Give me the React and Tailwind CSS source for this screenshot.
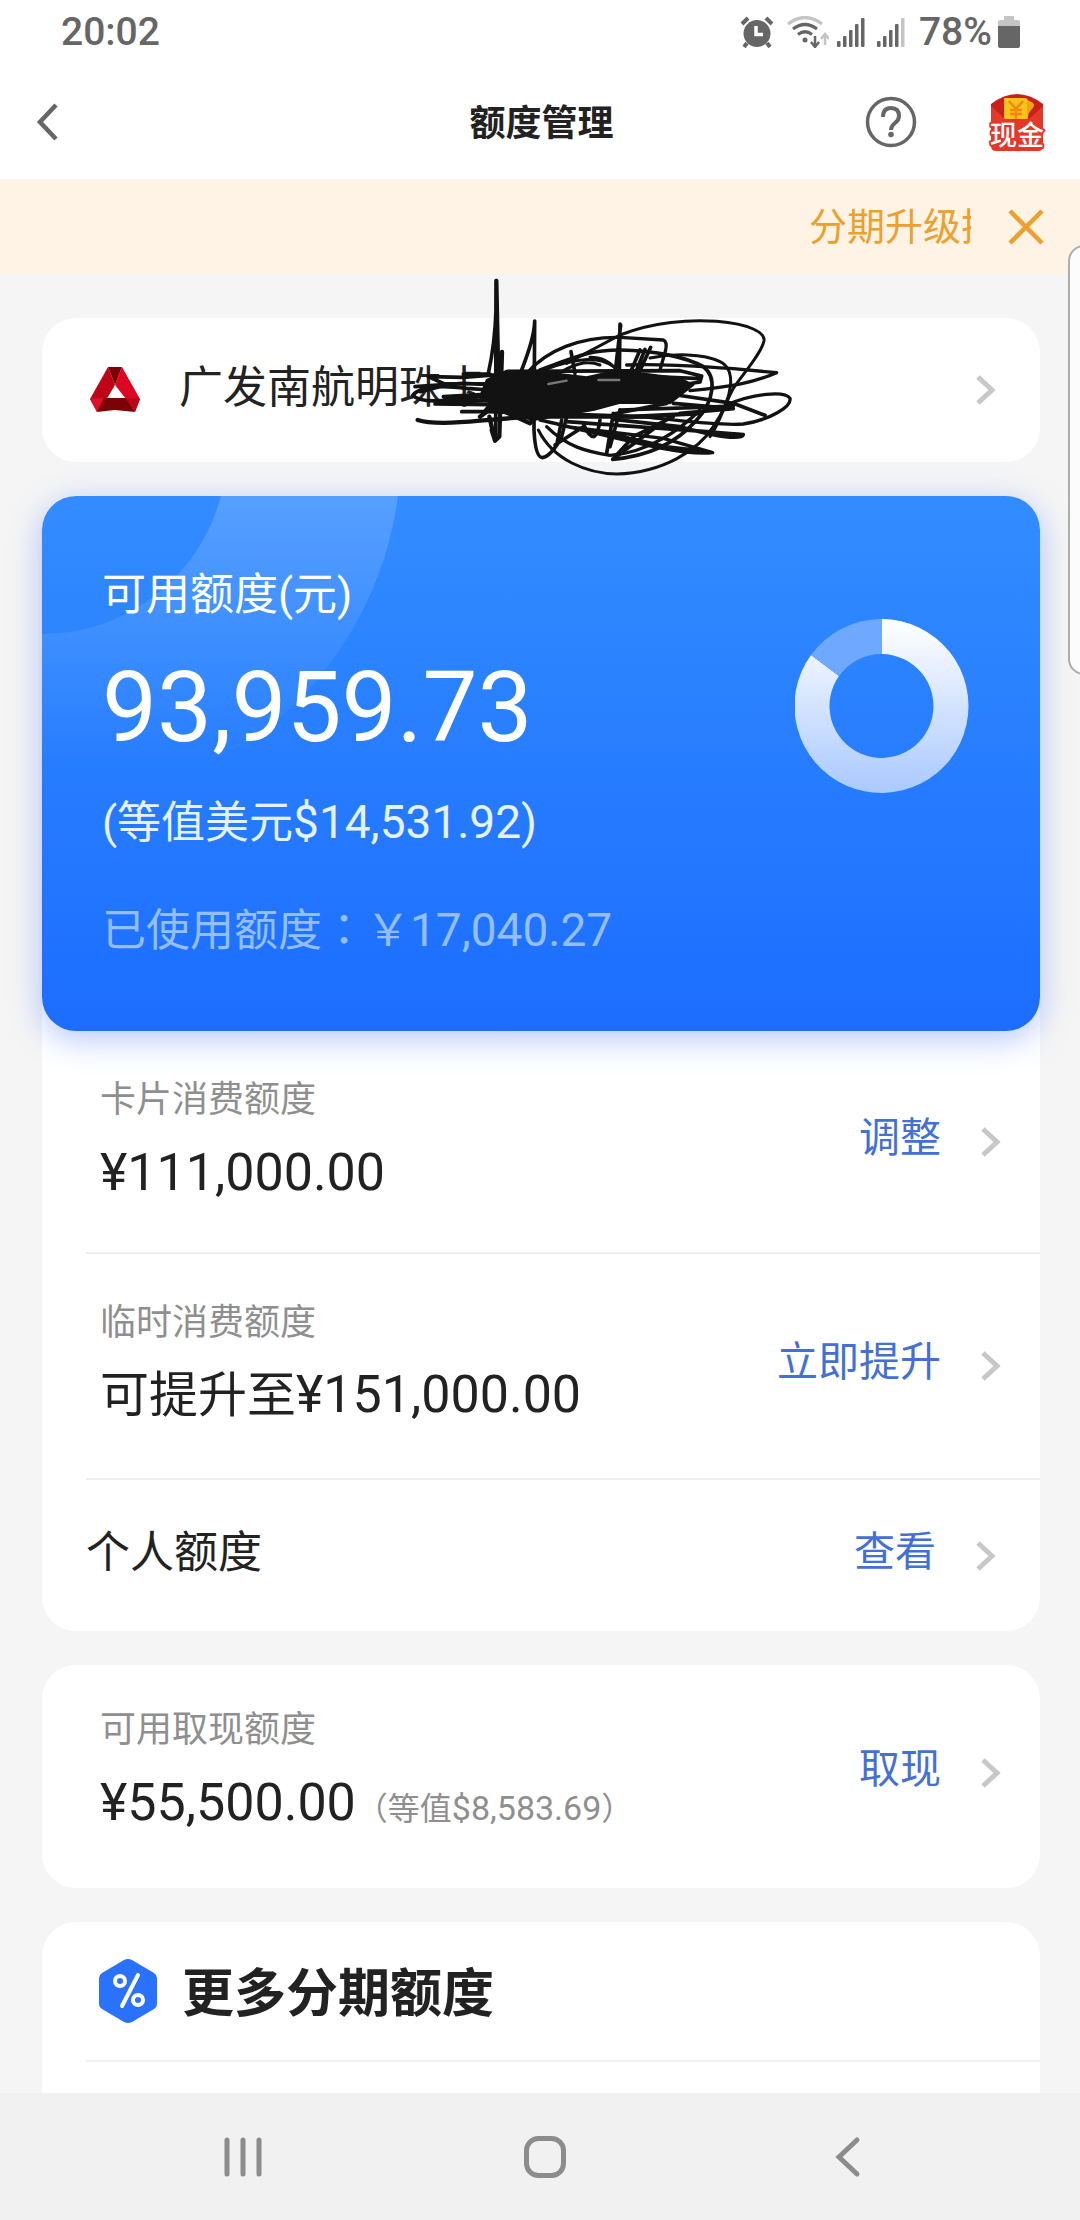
import React from "react";

function Chevron() {
  return (
    <svg className="h-[30px] w-5 shrink-0" viewBox="0 0 20 30" fill="none" stroke="#c8c8c8" strokeWidth="5" aria-hidden="true">
      <path d="M2 2 L16 15 L2 28" />
    </svg>
  );
}

function SignalBars({ last }) {
  return (
    <svg className="h-8 w-7 shrink-0" viewBox="0 0 28 32" fill="#666" aria-hidden="true">
      <rect x="0" y="25" width="3.5" height="6" rx="1" />
      <rect x="6" y="20" width="3.5" height="11" rx="1" />
      <rect x="12" y="14" width="3.5" height="17" rx="1" />
      <rect x="18" y="8" width="3.5" height="23" rx="1" />
      <rect x="24" y="2" width="3.5" height="29" rx="1" fill={last} />
    </svg>
  );
}

function StatusBar() {
  return (
    <div className="flex h-16 items-center bg-white pl-[61px] pr-[60px] text-[39px] leading-[48px] text-[#666]">
      <span className="flex-1 font-medium">20:02</span>
      <svg className="mr-[13px] h-8 w-[34px] shrink-0" viewBox="0 0 34 32" fill="none" stroke="#666" aria-hidden="true">
        <circle cx="17" cy="17.5" r="13.5" fill="#666" stroke="none" />
        <path d="M2 8 L8 2 M26 2 L32 8" strokeWidth="4" />
        <path d="M7 27 L4 31 M27 27 L30 31" strokeWidth="4" />
        <path d="M16 10 V18.5 H23" stroke="#fff" strokeWidth="3.5" />
      </svg>
      <svg className="mr-2 h-8 w-[42px] shrink-0" viewBox="0 0 42 32" fill="none" strokeWidth="3.2" aria-hidden="true">
        <path d="M1 8 Q18 -5 35 8" stroke="#c4c4c4" />
        <path d="M6 13 Q18 4 30 13" stroke="#666" />
        <path d="M11 18.500 Q18 13 25 18.500" stroke="#666" />
        <circle cx="18" cy="24" r="2.500" fill="#666" />
        <path d="M28 20 V31 M24 26 L28 31 L32 26" stroke="#666" strokeWidth="2.500" />
        <path d="M38 29 V18 M34 23 L38 18 L42 23" stroke="#c4c4c4" strokeWidth="2.500" />
      </svg>
      <div className="flex gap-3">
        <SignalBars last="#666" />
        <SignalBars last="#c4c4c4" />
      </div>
      <span className="ml-3.5 font-medium">78%</span>
      <svg className="ml-1.5 h-8 w-[22px] shrink-0" viewBox="0 0 22 32" aria-hidden="true">
        <path d="M6 0 H16 V4 H20 Q22 4 22 6 V12 H0 V6 Q0 4 2 4 H6Z" fill="#c4c4c4" />
        <path d="M0 10 H22 V30 Q22 32 20 32 H2 Q0 32 0 30Z" fill="#666" />
      </svg>
    </div>
  );
}

function CashEnvelope() {
  return (
    <svg className="h-[60px] w-[60px]" viewBox="0 0 60 60" aria-hidden="true">
      <path d="M4 12 Q30 -8 56 12 L56 34 H4Z" fill="#c9201b" />
      <path d="M17 6 H39 L42 9 Q46 10 47 13 Q46 17 42 19 L40 30 H17Z" fill="#fdc21c" />
      <path d="M40 8 L47 13 L40 24Z" fill="#f7a30f" />
      <path d="M22 9 L29 17 L36 9 M29 17 V27 M23 18 H35 M23 22 H35" fill="none" stroke="#ee8a12" strokeWidth="2.500" />
      <path d="M4 14 L18 27 H42 L56 14 V54 Q56 59 51 59 H9 Q4 59 4 54Z" fill="#e5372a" />
      <text
        x="30"
        y="53"
        textAnchor="middle"
        fontSize="27"
        fontWeight="500"
        fill="#fff"
        stroke="#e5372a"
        strokeWidth="4"
        strokeLinejoin="round"
        paintOrder="stroke"
      >
        现金
      </text>
    </svg>
  );
}

function Header() {
  return (
    <header className="grid h-[115px] grid-cols-3 items-center bg-white pl-9 pr-[33px]">
      <button type="button" aria-label="返回" className="w-6">
        <svg className="h-10 w-6" viewBox="0 0 24 40" fill="none" stroke="#666" strokeWidth="4.500" aria-hidden="true">
          <path d="M20 3 L4 20 L20 37" />
        </svg>
      </button>
      <h1 className="pt-1 text-center text-[36px] font-bold leading-[48px] text-[#222]">额度管理</h1>
      <div className="flex items-center justify-end gap-[70px]">
        <button type="button" aria-label="帮助">
          <svg className="h-[52px] w-[52px]" viewBox="0 0 52 52" fill="none" stroke="#666" strokeWidth="3.500" aria-hidden="true">
            <circle cx="26" cy="26" r="23.500" />
            <path d="M18 21 Q18 12 26 12 Q34 12 34 20 Q34 24 30 27 Q26 30 26 34" strokeWidth="4" />
            <circle cx="26" cy="38.500" r="2.800" fill="#666" stroke="none" />
          </svg>
        </button>
        <button type="button" aria-label="现金">
          <CashEnvelope />
        </button>
      </div>
    </header>
  );
}

function Notice() {
  return (
    <div className="flex h-[95px] items-center justify-end bg-[#fef3e4] pr-9 text-[#eca02e]">
      <p className="w-[162px] overflow-hidden whitespace-nowrap text-[38px] leading-[56px]">分期升级换</p>
      <button type="button" aria-label="关闭" className="ml-[37px]">
        <svg className="h-9 w-9" viewBox="0 0 36 36" fill="none" stroke="currentColor" strokeWidth="4.500" aria-hidden="true">
          <path d="M2 2 L34 34 M34 2 L2 34" />
        </svg>
      </button>
    </div>
  );
}

function Scribble() {
  return (
    <svg
      className="pointer-events-none absolute -top-12 left-[338px] h-[220px] w-[440px]"
      viewBox="0 0 1320 660"
      fill="none"
      stroke="#121212"
      strokeWidth="11"
      strokeLinecap="round"
      strokeLinejoin="round"
      aria-hidden="true"
    >
      <path d="M320 330 L380 302 L470 312 L520 310 L620 322 L700 304 L800 312 L900 325 L940 345 L870 400 L720 398 L640 420 L460 450 L380 430 L310 425 L330 400 L300 380 Z" fill="#121212" strokeWidth="6" />
      <path d="M348 32 L347 500 M348 120 Q345 220 325 310 M350 32 L356 330" />
      <path d="M366 246 L358 500 L345 512 L328 440 M335 480 L345 512" strokeWidth="13" />
      <path d="M464 153 Q464 200 425 300 M464 153 L462 480 Q466 562 487 563 Q515 558 545 500 L560 440" />
      <path d="M573 245 L585 310 M720 162 L718 320 M722 165 L704 320 M780 240 L750 310 M812 232 L790 280 L775 310 M795 238 L770 300" />
      <path d="M560 280 L720 195 C820 155 930 148 1010 154 C1110 162 1155 188 1152 212 C1145 250 1090 310 1060 355 C1030 410 1020 460 990 500" strokeWidth="9" />
      <path d="M440 310 C500 240 600 200 720 202 L850 210 Q862 215 857 240 L840 300" strokeWidth="10" />
      <path d="M475 480 C520 570 620 610 710 612 C850 608 955 540 1000 470 C1060 380 1070 300 1020 275 C970 250 880 250 810 264" strokeWidth="9" />
      <path d="M480 300 C570 270 610 240 720 240 C830 242 920 262 970 290 C1010 320 1005 390 950 450 C880 530 790 560 698 568 L870 440 M698 568 L760 500 L880 440" />
      <path d="M490 300 C600 260 660 260 700 290 M630 262 Q680 262 710 300 M520 320 C580 280 620 270 660 285" strokeWidth="9" />
      <path d="M740 285 C860 280 960 290 1060 296 L1190 308 C1120 338 1060 350 930 362" strokeWidth="10" />
      <path d="M1040 405 C1120 370 1215 362 1230 385 C1235 410 1170 450 1090 462 C1000 468 900 450 780 440" strokeWidth="10" />
      <path d="M890 375 L1060 400 L1155 436 M720 420 L960 412 L1060 408 M880 400 L1060 416 L900 430" />
      <path d="M385 304 L900 302 L965 318 L960 336 L860 352 M780 318 L960 326 M860 400 L700 432" />
      <path d="M560 455 C760 470 1000 485 1090 494 C1085 510 1010 500 900 470 L700 448" />
      <path d="M560 470 L850 505 L998 548 C900 560 700 500 480 450 M640 480 L860 530 L990 545" strokeWidth="10" />
      <path d="M500 470 C560 530 620 545 690 556 C800 550 900 480 960 420" strokeWidth="10" />
      <path d="M525 525 L610 470 M545 450 L530 525 M610 460 Q625 500 642 500 Q655 490 660 450 M700 430 L680 550 M720 420 L690 530" />
      <path d="M113 450 C150 462 220 460 300 452 L450 440 L800 440" strokeWidth="13" />
      <path d="M150 320 L250 322 L380 312 M250 312 L330 312 M105 350 L250 340 L350 345 M98 376 C120 350 180 345 260 355 L330 360 M98 376 C120 400 180 395 300 380 M165 402 L330 404 M145 320 L200 345 L120 365 M190 380 L330 372 M245 425 L350 425 M165 395 L320 392" strokeWidth="11" />
      <path d="M300 440 L340 410 L450 460 L470 430 L760 440 L960 430" strokeWidth="13" />
      <path d="M505 342 L560 332 M655 330 H718" stroke="#777" strokeWidth="7" />
    </svg>
  );
}

function CardPicker() {
  return (
    <section className="relative">
      <button type="button" className="flex min-h-36 w-full items-center rounded-[34px] bg-white pl-12 pr-11 text-left">
        <svg className="h-[46px] w-[50px] shrink-0" viewBox="0 0 50 46" aria-hidden="true">
          <path d="M18 0 L25 18 L12 40 L7 45 L0 32Z" fill="#c00418" />
          <path d="M32 0 L50 32 L45 45 L36 32 L25 18Z" fill="#dc0722" />
          <path d="M18 0 H32 L25 18Z" fill="#7d0206" />
          <path d="M0 32 L14 31 L7 45Z" fill="#e00f2a" />
          <path d="M14 31 H36 L45 45 L25 43 L7 45Z" fill="#7d0206" />
          <path d="M36 31 L50 32 L45 45Z" fill="#b90518" />
          <path d="M25 18 L31 31 H19Z" fill="#fff" />
        </svg>
        <span className="ml-[39px] flex-1 pb-1 text-[44px] leading-[64px] text-[#222]">广发南航明珠卡</span>
        <Chevron />
      </button>
      <Scribble />
    </section>
  );
}

function UsageRing() {
  return (
    <svg className="h-[174px] w-[174px] shrink-0" viewBox="0 0 174 174" role="img" aria-label="额度使用比例">
      <defs>
        <linearGradient id="ring" x1="0" y1="0" x2="0" y2="1">
          <stop offset="0" stopColor="#ffffff" />
          <stop offset="1" stopColor="#a9c9ff" />
        </linearGradient>
      </defs>
      <path d="M87 0 A87 87 0 1 1 16 36 L44 57 A52 52 0 1 0 87 35 Z" fill="url(#ring)" />
      <path d="M16 36 A87 87 0 0 1 87 0 L87 35 A52 52 0 0 0 44 57 Z" fill="#6fa9ff" />
    </svg>
  );
}

function AvailablePanel() {
  return (
    <div className="relative flex items-start justify-between overflow-hidden rounded-[34px] bg-linear-to-b from-[#338cff] to-[#1c6dff] pb-[68px] pl-[60px] pr-[71px] pt-[67px]">
      <svg className="absolute left-0 top-0 h-[320px] w-[360px]" viewBox="0 0 360 320" aria-hidden="true">
        <defs>
          <linearGradient id="halo" x1="0" y1="0" x2="0" y2="1">
            <stop offset="0" stopColor="#fff" stopOpacity="0.17" />
            <stop offset="0.850" stopColor="#fff" stopOpacity="0" />
          </linearGradient>
        </defs>
        <path d="M179 0 A185 185 0 0 1 0 138 V312 A359 359 0 0 0 356 0 Z" fill="url(#halo)" />
      </svg>
      <div className="relative text-[44px] leading-[64px] text-white">
        <p>可用额度(元)</p>
        <p className="mt-2.5 text-[98px] leading-[142px]">93,959.73</p>
        <p className="mt-3 text-[#e6f1ff]">
          (等值美元<span className="text-[46px] leading-none">$14,531.92)</span>
        </p>
        <p className="mt-11 text-[#94beff]">
          已使用额度<span className="font-['Noto_Sans_CJK_TC'] leading-none">：</span>￥<span className="text-[46px] leading-none">17,040.27</span>
        </p>
      </div>
      <div className="relative mt-14">
        <UsageRing />
      </div>
    </div>
  );
}

function Action({ children }) {
  return (
    <a href="#" className="flex items-center gap-10 text-[41px] leading-[56px] text-[#4470d6]">
      <span className="pb-2">{children}</span>
      <Chevron />
    </a>
  );
}

function LimitSummary() {
  return (
    <section className="rounded-[34px] bg-white text-[#222]">
      <div className="rounded-[34px] shadow-[0_8px_32px_rgba(50,100,255,0.36)]">
        <AvailablePanel />
      </div>
      <div className="ml-11 flex items-center justify-between border-b-2 border-[#efefef] pr-[39px]">
        <div className="pb-[47px] pl-3.5 pt-[45px]">
          <p className="text-[36px] leading-[48px] text-[#8f8f8f]">卡片消费额度</p>
          <p className="mt-[17px] text-[52px] leading-[64px]">¥111,000.00</p>
        </div>
        <Action>调整</Action>
      </div>
      <div className="ml-11 flex items-center justify-between border-b-2 border-[#efefef] pr-[39px]">
        <div className="pb-[50px] pl-3.5 pt-[45px]">
          <p className="text-[36px] leading-[48px] text-[#8f8f8f]">临时消费额度</p>
          <p className="mt-[17px] text-[49px] leading-[64px]">
            可提升至<span className="text-[52px] leading-none">¥151,000.00</span>
          </p>
        </div>
        <Action>立即提升</Action>
      </div>
      <div className="ml-11 flex min-h-[151px] items-center justify-between pr-11">
        <p className="pb-1.5 text-[44px] leading-[64px]">个人额度</p>
        <Action>查看</Action>
      </div>
    </section>
  );
}

function CashLimit() {
  return (
    <section className="flex items-center justify-between rounded-[34px] bg-white pl-[58px] pr-[39px] text-[#222]">
      <div className="pb-[53px] pt-[41px]">
        <p className="text-[36px] leading-[48px] text-[#8f8f8f]">可用取现额度</p>
        <p className="mt-[17px] text-[52px] leading-[64px]">
          ¥55,500.00
          <span className="text-[32px] leading-none text-[#8f8f8f]">
            （等值<span className="text-[34px]">$8,583.69</span>）
          </span>
        </p>
      </div>
      <div className="pb-2">
        <Action>取现</Action>
      </div>
    </section>
  );
}

function InstalmentLimit() {
  return (
    <section className="flex-1 rounded-t-[34px] bg-white pl-11">
      <div className="flex h-[140px] items-center gap-6 border-b-2 border-[#f3f3f3] pl-3">
        <svg className="h-[66px] w-[60px] shrink-0" viewBox="0 0 60 66" fill="none" aria-hidden="true">
          <path d="M26 2 Q30 0 34 2 L56 15 Q59 17 59 20 V46 Q59 49 56 51 L34 64 Q30 66 26 64 L4 51 Q1 49 1 46 V20 Q1 17 4 15Z" fill="#2a71fb" />
          <path d="M40 17 L24 48" stroke="#fff" strokeWidth="4" strokeLinecap="round" />
          <circle cx="22" cy="23" r="5" stroke="#fff" strokeWidth="4" />
          <circle cx="40" cy="42" r="5" stroke="#fff" strokeWidth="4" />
        </svg>
        <h2 className="pt-2 text-[52px] font-bold leading-[72px] text-[#222]">更多分期额度</h2>
      </div>
    </section>
  );
}

function NavBar() {
  return (
    <nav className="flex h-[127px] items-center justify-center gap-[242px] bg-[#f1f1f1] pl-2.5">
      <button type="button" aria-label="最近任务">
        <svg className="h-[60px] w-[60px]" viewBox="0 0 60 60" stroke="#8c8c8c" strokeWidth="5" strokeLinecap="round" aria-hidden="true">
          <path d="M14 13 V47 M30 13 V47 M46 13 V47" />
        </svg>
      </button>
      <button type="button" aria-label="主屏幕">
        <svg className="h-[60px] w-[60px]" viewBox="0 0 60 60" fill="none" stroke="#8c8c8c" strokeWidth="5" aria-hidden="true">
          <rect x="11.500" y="11.500" width="37" height="37" rx="12" />
        </svg>
      </button>
      <button type="button" aria-label="返回上一页">
        <svg className="h-[60px] w-[60px]" viewBox="0 0 60 60" fill="none" stroke="#8c8c8c" strokeWidth="5" strokeLinecap="round" aria-hidden="true">
          <path d="M40 13 L22 30 L40 47" />
        </svg>
      </button>
    </nav>
  );
}

export default function App() {
  return (
    <div className="relative flex min-h-screen flex-col overflow-hidden bg-[#f5f5f5] font-['Roboto','Noto_Sans_CJK_SC',sans-serif]">
      <StatusBar />
      <Header />
      <Notice />
      <main className="flex flex-1 flex-col gap-[34px] pl-[42px] pr-10 pt-11">
        <CardPicker />
        <LimitSummary />
        <CashLimit />
        <InstalmentLimit />
      </main>
      <NavBar />
      <div className="absolute -right-2 top-[245px] h-[430px] w-5 rounded-l-[16px] border-2 border-[#adadad] bg-[#fcfcfc]" />
    </div>
  );
}
